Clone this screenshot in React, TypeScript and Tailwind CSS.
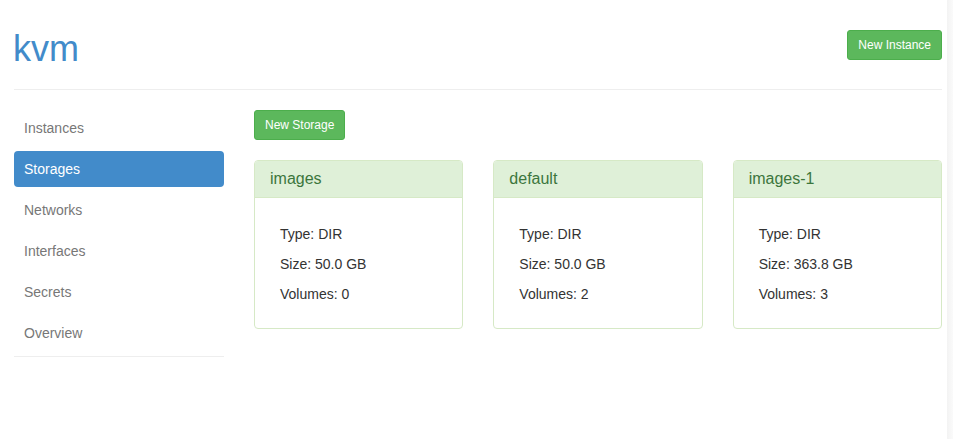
import React from "react";

const navItems = ["Instances", "Storages", "Networks", "Interfaces", "Secrets", "Overview"];
const storages = [
  { name: "images", type: "DIR", size: "50.0 GB", volumes: 0 },
  { name: "default", type: "DIR", size: "50.0 GB", volumes: 2 },
  { name: "images-1", type: "DIR", size: "363.8 GB", volumes: 3 },
];

export default function App() {
  return (
    <div className="flex min-h-[439px] w-[953px] bg-white text-[14px] leading-[20px] text-[#333]" style={{ fontFamily: '"Liberation Sans", Arial, sans-serif' }}>
      <div className="w-[947px] px-[14px] pr-[5px]">
        <div className="flex items-start justify-between border-b border-[#eee] pb-[20px] pt-[29px]">
          <h1 className="text-[36px] leading-[40px] text-[#428bca] -ml-[1px]">kvm</h1>
          <button className="mt-[1px] h-[30px] rounded-[3px] border border-[#4cae4c] bg-[#5cb85c] px-[10px] text-[12px] leading-[18px] text-white">
            New Instance
          </button>
        </div>
        <div className="mt-[20px] flex gap-[30px]">
          <div className="w-[210px] shrink-0">
            <ul className="flex flex-col gap-[5px] border-b border-[#eee] pb-[5px]">
              {navItems.map((item) => (
                <li
                  key={item}
                  className={
                    item === "Storages"
                      ? "h-[36px] rounded-[4px] bg-[#428bca] px-[10px] py-[8px] text-white"
                      : "h-[36px] px-[10px] py-[8px] text-[#777]"
                  }
                >
                  {item}
                </li>
              ))}
            </ul>
          </div>
          <div className="flex-1">
            <button className="h-[30px] rounded-[3px] border border-[#4cae4c] bg-[#5cb85c] px-[10px] text-[12px] leading-[18px] text-white">
              New Storage
            </button>
            <div className="mt-[20px] grid grid-cols-3 gap-[30px]">
              {storages.map((s) => (
                <div key={s.name} className="rounded-[4px] border border-[#d6e9c6]">
                  <div className="h-[37px] rounded-t-[3px] border-b border-[#d6e9c6] bg-[#dff0d8] px-[15px] py-[8px] text-[16px] leading-[20px] text-[#3c763d]">
                    {s.name}
                  </div>
                  <div className="flex flex-col gap-[10px] px-[25px] pb-[24px] pt-[26px]">
                    <div>Type: {s.type}</div>
                    <div>Size: {s.size}</div>
                    <div>Volumes: {s.volumes}</div>
                  </div>
                </div>
              ))}
            </div>
          </div>
        </div>
      </div>
      <div className="w-[6px] bg-gradient-to-r from-[#f3f3f3] to-[#fafafa]" />
    </div>
  );
}
